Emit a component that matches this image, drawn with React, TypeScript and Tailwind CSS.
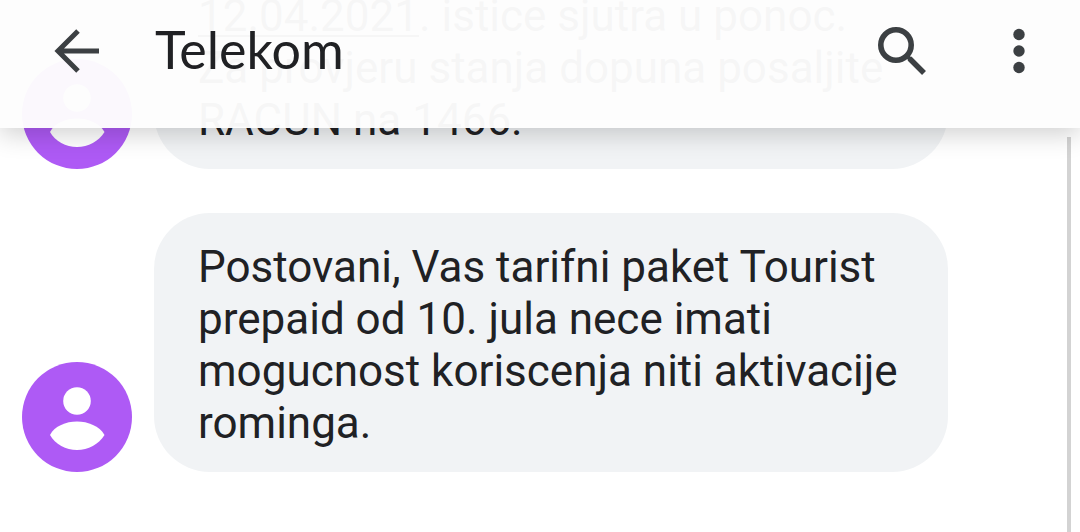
import type { ReactNode } from "react";

function Avatar() {
  return (
    <svg viewBox="0 0 110 110" className="size-[110px] shrink-0" role="img" aria-label="Telekom">
      <circle cx="55" cy="55" r="55" fill="#ae5af5" />
      <circle cx="55" cy="39" r="13.800" fill="#fff" />
      <path d="M28 73C32.500 64 44 59.500 55 59.500C66 59.500 77.500 64 82.500 73C77 82 66 88 55 88C44 88 33 82 28 73Z" fill="#fff" />
    </svg>
  );
}

function Message({ children }: { children: ReactNode }) {
  return (
    <li className="flex shrink-0 items-end gap-[22px]">
      <Avatar />
      <p className="w-full max-w-[794px] rounded-[56px] bg-[#f1f3f5] px-11 pt-7 pb-[23px] text-[44px] leading-[52px] text-[#202124]">
        {children}
      </p>
    </li>
  );
}

export default function App() {
  return (
    <div className="relative flex h-screen flex-col justify-end overflow-hidden bg-white font-['Roboto',sans-serif]">
      <header className="absolute inset-x-0 top-0 z-10 flex h-32 items-center bg-[#fdfdfd]/97 pr-11 pb-[26px] pl-[53px] text-[#3c4043] shadow-[0_6px_24px_rgba(0,0,0,0.19)]">
        <button type="button" aria-label="Back" className="size-12">
          <svg viewBox="0 0 48 48" className="size-12" fill="none" stroke="currentColor" strokeWidth="5">
            <path d="M46 24H6M25 4L5 24L25 44" />
          </svg>
        </button>
        <h1 className="ml-[54px] flex-1 pb-1 font-['Lato',sans-serif] text-[52px] leading-[60px] text-[#202124]">Telekom</h1>
        <button type="button" aria-label="Search" className="size-12">
          <svg viewBox="0 0 48 48" className="size-12" fill="none" stroke="currentColor">
            <circle cx="18" cy="18" r="15.200" strokeWidth="5.600" />
            <path d="M29 29L33 33" strokeWidth="4" />
            <path d="M31.500 31.500L46 46" strokeWidth="5.500" />
          </svg>
        </button>
        <button type="button" aria-label="More options" className="ml-[76px] h-12 w-[34px]">
          <svg viewBox="0 0 34 48" className="h-12 w-[34px]" fill="currentColor">
            <circle cx="17" cy="7.500" r="5.700" />
            <circle cx="17" cy="24" r="5.700" />
            <circle cx="17" cy="40.500" r="5.700" />
          </svg>
        </button>
      </header>

      <ul className="flex flex-col gap-11 px-[22px] pb-[60px]">
        <Message>
          <a href="#date" className="underline decoration-2 underline-offset-4">12.04.2021</a>. istice sjutra u ponoc. Za provjeru stanja dopuna posaljite RACUN na 1466.
        </Message>
        <Message>
          Postovani, Vas tarifni paket Tourist prepaid od 10. jula nece imati mogucnost koriscenja niti aktivacije rominga.
        </Message>
      </ul>

      <div className="absolute top-[137px] right-[9px] bottom-0 w-1 bg-[#d3d3d3]" />
    </div>
  );
}
